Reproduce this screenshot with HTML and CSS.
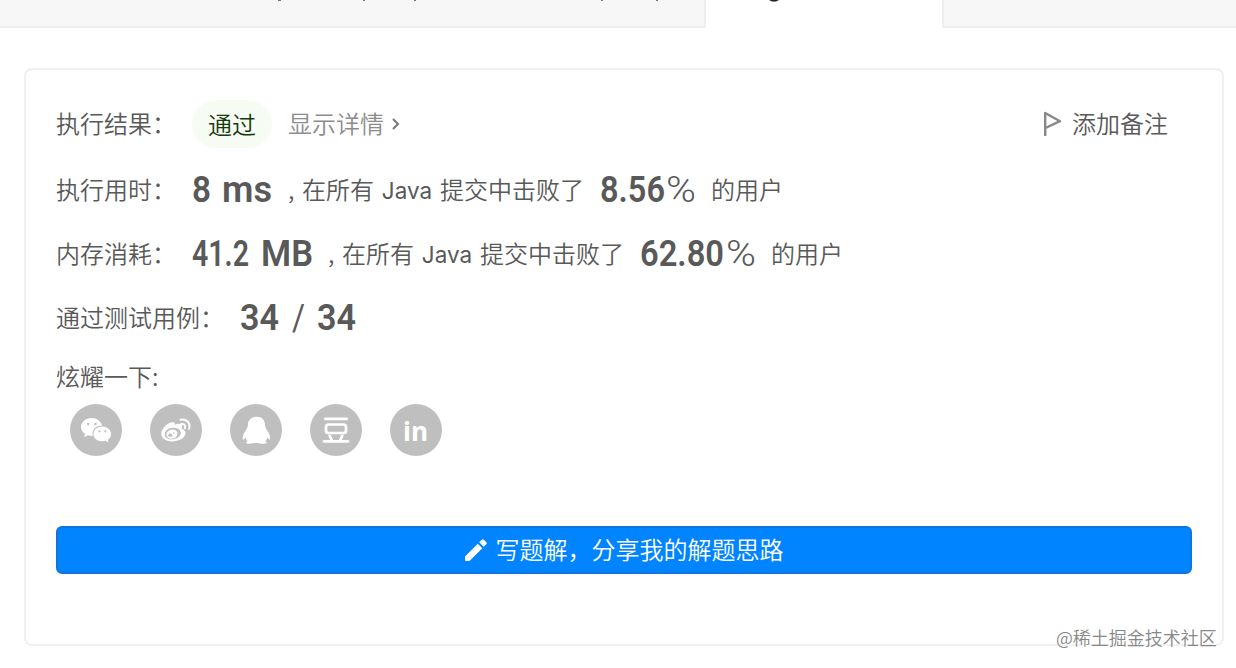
FILE: index.html
```
<!DOCTYPE html>
<html lang="zh-CN">
  <head>
    <meta charset="utf-8">
    <title>执行结果</title>
    <link rel="stylesheet" href="styles.css">
  </head>
  <body>
    <div class="tabs">
      <div class="tab tab-left">
        <svg class="tails" width="706" height="2"><path d="M278 0h3v1h-3zM363 0h2v1h-2zM414 0h2v1h-2zM601 0h2v1h-2zM656 0h2v1h-2z" fill="#777"/></svg>
      </div>
      <div class="tab active">
        <svg class="tails" width="236" height="2"><path d="M63 0h10l-3 1.500h-4z" fill="#222"/></svg>
      </div>
      <div class="tab tab-right"></div>
    </div>

    <div class="card">
      <div class="row result">
        <span class="label">执行结果：</span>
        <span class="badge">通过</span>
        <span class="detail">显示详情</span>
        <svg class="arrow" width="10" height="14" viewBox="0 0 10 14"><path d="M2 2l5 5-5 5" fill="none" stroke="#777" stroke-width="2"/></svg>
        <span class="note">
          <svg width="20" height="26" viewBox="0 0 20 26"><path d="M2.2 25V2L17 10.2 2.5 17" fill="none" stroke="#888" stroke-width="2.4" stroke-linejoin="round"/></svg>
          <span>添加备注</span>
        </span>
      </div>

      <div class="row">
        <span class="label">执行用时：</span>
        <svg class="num" width="80" height="40"><text x="0" y="32" textLength="19" lengthAdjust="spacingAndGlyphs">8</text><text x="30" y="32" textLength="50" lengthAdjust="spacingAndGlyphs">ms</text></svg>
        <span class="comma">,</span><span>在所有</span><span class="java">Java</span><span>提交中击败了</span>
        <svg class="num" width="95" height="40"><text x="-1" y="32" textLength="65" lengthAdjust="spacingAndGlyphs">8.56</text><text class="pct" x="65" y="32" textLength="30" lengthAdjust="spacingAndGlyphs">%</text></svg>
        <span class="users">的用户</span>
      </div>

      <div class="row">
        <span class="label">内存消耗：</span>
        <svg class="num" width="120" height="40"><text x="0" y="32" textLength="57" lengthAdjust="spacingAndGlyphs">41.2</text><text x="69" y="32" textLength="52" lengthAdjust="spacingAndGlyphs">MB</text></svg>
        <span class="comma">,</span><span>在所有</span><span class="java">Java</span><span>提交中击败了</span>
        <svg class="num" width="115" height="40"><text x="-1" y="32" textLength="84" lengthAdjust="spacingAndGlyphs">62.80</text><text class="pct" x="85" y="32" textLength="30" lengthAdjust="spacingAndGlyphs">%</text></svg>
        <span class="users">的用户</span>
      </div>

      <div class="row">
        <span class="label wide">通过测试用例：</span>
        <svg class="num" width="120" height="40"><text x="0" y="32" textLength="39" lengthAdjust="spacingAndGlyphs">34</text><text class="slash" x="52" y="32" textLength="13" lengthAdjust="spacingAndGlyphs">/</text><text x="77" y="32" textLength="39" lengthAdjust="spacingAndGlyphs">34</text></svg>
      </div>

      <div class="share-label">炫耀一下:</div>
      <div class="share">
        <svg viewBox="0 0 52 52">
          <circle class="dot" cx="26" cy="26" r="26"/>
          <path d="M21.8 14C15.8 14 11 18 11 23c0 2.9 1.6 5.3 4.1 6.9L14 33.2l3.9-2c1.6.5 3.2.7 5 .6-1.8-5.4 2.8-10.4 9-10.4C31 17.100 26.700 14 21.800 14z"/>
          <path d="M32.300 22.500c-5 0-8.900 3.300-8.900 7.400s3.900 7.400 8.900 7.400c1.200 0 2.300-.2 3.300-.5l3 1.600-.8-2.600c2.100-1.400 3.300-3.500 3.300-5.900 0-4.100-3.900-7.400-8.800-7.400z"/>
          <g class="dot"><circle cx="18.100" cy="20" r="1.300"/><circle cx="25.500" cy="20" r="1.300"/><circle cx="29.500" cy="27.300" r="1.100"/><circle cx="35.300" cy="27.300" r="1.100"/></g>
        </svg>
        <svg viewBox="0 0 52 52">
          <circle class="dot" cx="26" cy="26" r="26"/>
          <path d="M23.500 18.500c-4-1.400-12.300 5.500-12.300 11.400 0 4.500 5.400 7.500 11.300 7.500 7.700 0 13-4.300 13-8.300 0-2.400-2-3.700-3.800-4.300.9-2.600.2-4.500-2-4.900-1.700-.3-3.400.3-5 .8.6-1.200.4-1.900-1.200-2.200z"/>
          <ellipse class="dot" cx="22.700" cy="29.600" rx="8.200" ry="5.800" transform="rotate(-8 22.700 29.600)"/>
          <ellipse cx="22" cy="30.100" rx="5.600" ry="4.500" transform="rotate(-15 22 30.100)"/>
          <ellipse class="dot" cx="20.300" cy="31.300" rx="2" ry="1.700"/><circle class="dot" cx="23.800" cy="29" r=".8"/>
          <path class="wave" d="M30.500 15.800c5.300-1.600 10.600 3.100 8.600 9M31.300 20c2.700-.5 4.600 1.400 3.700 4.200"/>
        </svg>
        <svg viewBox="0 0 52 52">
          <circle class="dot" cx="26" cy="26" r="26"/>
          <path d="M26.800 12.800c-5.800 0-9.100 3.800-8.900 8.600l-1 3.100c-2.400 3.400-4.900 7.500-4.100 10.500.5 1.400 1.500.4 2.800-1.400.4 1.500 1 2.700 2 3.700-1.300.6-1.700.9-1.500 1.700.4 1 7.200.9 10.400-.3 3.200 1.200 9.700 1.300 10.200.3.300-.8-.1-1.100-1.500-1.700 1-1 1.700-2.200 2.100-3.700 1.300 1.800 2.200 2.600 2.600 1.400.8-3-1.500-7-4.100-10.500l-.8-3.100c.2-4.900-3-8.600-8.200-8.600z"/>
        </svg>
        <svg viewBox="0 0 52 52">
          <circle class="dot" cx="26" cy="26" r="26"/>
          <path class="line" d="M15.300 14.800h21.400M14 37.400h24M19.700 31.800l2.500 5M32.300 31.800l-2.500 5"/>
          <rect class="line" x="16" y="20.500" width="20" height="8.500" rx="2.500"/>
        </svg>
        <svg viewBox="0 0 52 52">
          <circle class="dot" cx="26" cy="26" r="26"/>
          <text class="in" x="13" y="36.500" textLength="25" lengthAdjust="spacingAndGlyphs">in</text>
        </svg>
      </div>

      <button class="write">
        <svg width="22" height="22" viewBox="0 0 22 22"><path d="M0 17.500L12.800 4.700l4.500 4.500L4.500 22H1.200Q0 22 0 20.800zM14.200 3.300L16.800.7q1-1 2 0l2.500 2.500q1 1 0 2l-2.600 2.600z"/></svg>
        <span>写题解，分享我的解题思路</span>
      </button>
    </div>
    <div class="watermark">@稀土掘金技术社区</div>
  </body>
</html>
```
FILE: styles.css
```
* { box-sizing: border-box; }
body { margin: 0; width: 1236px; height: 668px; overflow: hidden; background: #fff; color: #595959; font: 350 24px/32px "Noto Sans CJK SC", sans-serif; }
svg { display: block; flex: none; }

.tabs { display: flex; height: 28px; }
.tab { border-bottom: 2px solid #eee; background: #f7f7f7; }
.tab-left { width: 706px; border-right: 2px solid #eee; }
.active { width: 236px; background: #fff; border-bottom-color: #fff; }
.tab-right { flex: 1; border-left: 2px solid #eee; }

.card { width: 1200px; height: 578px; margin: 40px 0 0 24px; padding: 22px 30px 0; border: 2px solid #f0f0f0; border-radius: 8px; }
.row { display: flex; align-items: center; height: 64px; white-space: nowrap; }
.row > span, .note span, .write span { padding-bottom: 2px; }
.result { margin-bottom: 2px; }
.label { width: 120px; margin-right: 16px; }
.wide { width: 168px; }
.row > .badge { height: 48px; padding: 0 16px; border-radius: 24px; line-height: 47px; background: #f6fbf4; color: #173a0b; }
.detail { margin-left: 16px; color: #8c8c8c; }
.arrow { margin-left: 7px; }
.row > .note { display: flex; align-items: center; gap: 9px; margin-left: auto; margin-right: 24px; padding: 0; }

.num { overflow: visible; fill: #595959; font: 600 37.500px Roboto, sans-serif; }
.pct { font-weight: 350; }
.slash { font-weight: 400; }
.comma { width: 14px; margin-left: 16px; }
.row > .java { width: 66px; padding: 1px 0 0; text-align: center; font: 400 22.500px/32px Inter, sans-serif; }
.row span + .num { margin-left: 17px; }
.row .label + .num { margin-left: 0; }
.users { margin-left: 15px; }

.share-label { margin-top: 10px; }
.share { display: flex; gap: 28px; padding: 12px 14px 0; }
.share svg { width: 52px; height: 52px; fill: #fff; }
.share .dot { fill: #bfbfbf; }
.line, .wave { fill: none; stroke: #fff; stroke-width: 2.700; stroke-linecap: round; }
.wave { stroke-width: 2; }
.in { font: 700 27px "Open Sans", sans-serif; }

.write { display: flex; align-items: center; justify-content: center; gap: 9px; width: 1136px; height: 48px; margin-top: 70px; padding: 0; border: 2px solid #1173dc; border-radius: 6px; background: #0084ff; color: #fff; font: inherit; }
.write svg { fill: #fff; }
.watermark { position: absolute; left: 1056px; top: 624px; font-size: 18px; line-height: 26px; color: #888; text-shadow: 1px 1px 0 #fff; white-space: nowrap; }
```
